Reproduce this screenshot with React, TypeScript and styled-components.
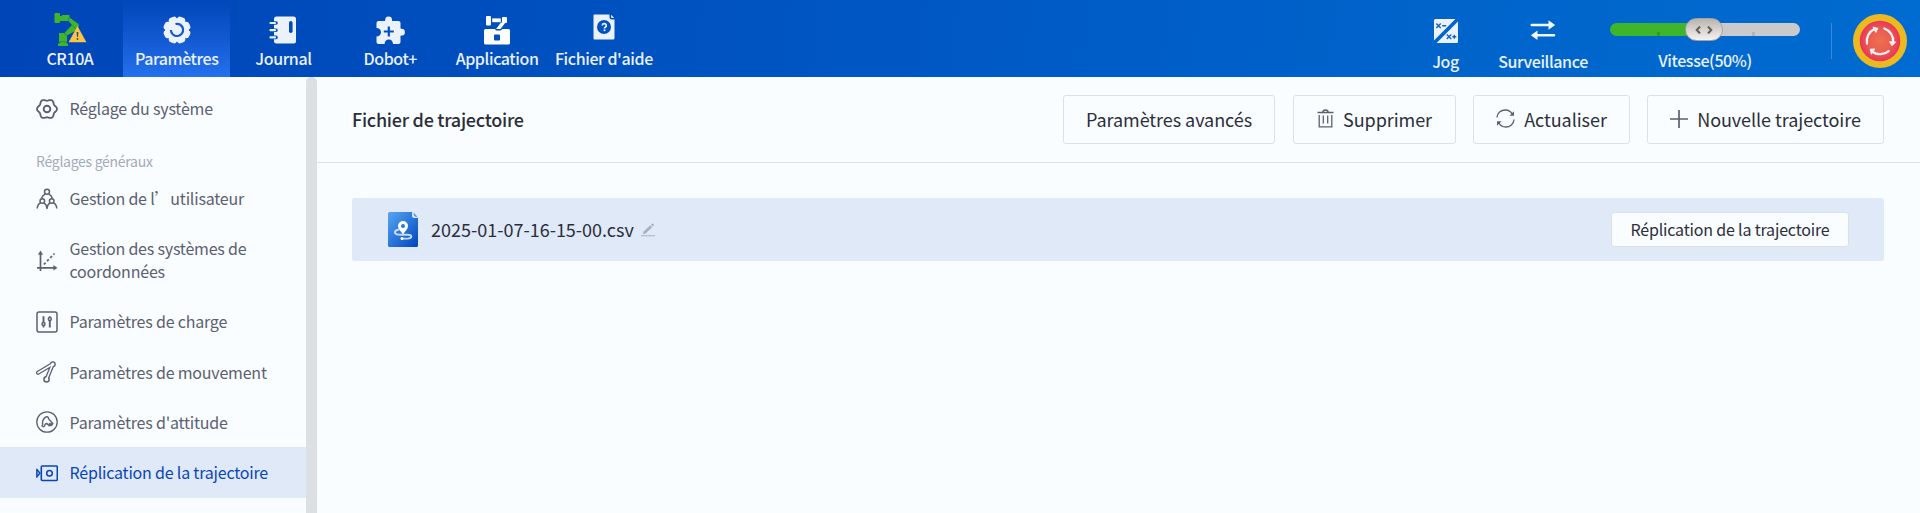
import React from "react";
import styled, { createGlobalStyle } from "styled-components";

const Global = createGlobalStyle`
  * { box-sizing: border-box; }
  body {
    margin: 0;
    background: #fafdff;
    font-family: "Noto Sans CJK SC", "Noto Sans", sans-serif;
    color: #2b2f3a;
    overflow: hidden;
  }
  svg { display: block; flex: none; }
`;

const Page = styled.div`
  display: flex;
  flex-direction: column;
  width: 1920px;
  height: 513px;
  overflow: hidden;
`;

const TopBar = styled.header`
  display: flex;
  flex: none;
  height: 77px;
  padding-left: 16px;
  background: linear-gradient(97deg, #0045b8 0%, #0054c2 40%, #0064cb 75%, #006bd0 100%);
  color: #eaf1fc;
`;

const NavItem = styled.div<{ $active?: boolean }>`
  display: flex;
  flex-direction: column;
  align-items: center;
  width: 106.8px;
  padding-left: 1px;
  background: ${(p) => (p.$active ? "linear-gradient(180deg, #0047b9 0%, #0f55cb 40%, #2470ee 100%)" : "none")};
`;

const NavIcon = styled.div<{ $h?: number }>`
  display: flex;
  align-items: center;
  justify-content: center;
  height: ${(p) => p.$h ?? 60}px;
  flex: none;
`;

const Label = styled.span<{ $mt?: number }>`
  font-size: 16px;
  font-weight: 500;
  line-height: 24px;
  letter-spacing: -0.4px;
  margin-top: ${(p) => p.$mt ?? -14}px;
  white-space: nowrap;
`;

const RightTools = styled.div`
  display: flex;
  margin-left: auto;
  padding-right: 13px;
`;

const Tool = styled.div<{ $w: number }>`
  display: flex;
  flex-direction: column;
  align-items: center;
  width: ${(p) => p.$w}px;
`;

const Speed = styled.div`
  display: flex;
  flex-direction: column;
  align-items: center;
  width: 190px;
  margin-left: 18px;
  padding-top: 23px;
`;

const Track = styled.div`
  position: relative;
  display: flex;
  width: 190px;
  height: 13px;
  border-radius: 7px;
  background: linear-gradient(90deg, #3fb52c 50%, #cacaca 50%);
`;

const Tick = styled.i<{ $color: string }>`
  width: 3px;
  height: 4px;
  margin-top: 9px;
  margin-left: 47px;
  margin-right: 45px;
  background: ${(p) => p.$color};
`;

const Thumb = styled.div`
  position: absolute;
  left: 75px;
  top: -5px;
  width: 38px;
  height: 23px;
  border-radius: 12px;
  border: 1px solid #a9a49f;
  background: linear-gradient(180deg, #b9b4ae 0%, #d4d0cc 45%, #f4f2f0 100%);
  display: flex;
  align-items: center;
  justify-content: center;
`;

const Divider = styled.div`
  width: 1px;
  height: 36px;
  margin: 23px 21px 0 31px;
  background: #3c86dc;
`;

const EStop = styled.div`
  padding-top: 14px;
`;

const Body = styled.div`
  display: flex;
  flex: 1;
  min-height: 0;
`;

const Sidebar = styled.nav`
  width: 306px;
  padding-top: 7px;
  overflow: hidden;
`;

const SideItem = styled.div<{ $active?: boolean; $h?: number }>`
  display: flex;
  align-items: center;
  height: ${(p) => p.$h ?? 50}px;
  padding-left: 36px;
  color: ${(p) => (p.$active ? "#0a45b8" : "#5a6070")};
  background: ${(p) => (p.$active ? "#e0e9f8" : "transparent")};
`;

const SideText = styled.span<{ $lift?: number }>`
  margin-left: 11.5px;
  padding-bottom: ${(p) => p.$lift ?? 0}px;
  font-size: 16px;
  line-height: 23px;
  letter-spacing: -0.2px;
  width: 210px;
`;

const SideGroup = styled.div`
  height: 40px;
  padding-left: 36px;
  font-size: 14px;
  line-height: 55px;
  letter-spacing: -0.28px;
  color: #a4abb8;
`;

const ScrollBar = styled.div`
  flex: none;
  width: 11px;
  border-radius: 5px 5px 0 0;
  background: #dde0e3;
`;

const Main = styled.main`
  flex: 1;
  min-width: 0;
`;

const Heading = styled.div`
  display: flex;
  align-items: center;
  height: 86px;
  padding: 0 36px 0 35px;
  border-bottom: 1px solid #dde2e8;
`;

const Title = styled.h1`
  margin: 0 auto 0 0;
  padding-bottom: 2px;
  font-size: 18px;
  font-weight: 500;
  line-height: 26px;
  letter-spacing: -0.26px;
`;

const Button = styled.button<{ $w: number; $after?: number }>`
  display: flex;
  align-items: center;
  justify-content: center;
  gap: 9px;
  width: ${(p) => p.$w}px;
  height: 49px;
  padding: 0 0 2px;
  margin-right: ${(p) => p.$after ?? 17}px;
  border: 1px solid #dce1e7;
  border-radius: 3px;
  background: #fafdff;
  color: #2b2f3a;
  font-family: inherit;
  font-size: 18px;
  letter-spacing: -0.06px;
  white-space: nowrap;
`;

const FileRow = styled.div`
  display: flex;
  align-items: center;
  height: 63px;
  margin: 35px 36px 0 35px;
  padding: 0 35px 0 36px;
  border-radius: 3px;
  background: #e0e9f8;
`;

const FileName = styled.span`
  margin: 0 7px 0 13px;
  padding-bottom: 2px;
  font-size: 18px;
  line-height: 26px;
`;

const RowButton = styled(Button)`
  height: 35px;
  margin-left: auto;
  padding-bottom: 1px;
  font-size: 16px;
  letter-spacing: -0.18px;
`;

const RobotIcon = () => (
  <svg width="34" height="34" viewBox="56 13 34 34">
    <g fill="#3fb52c">
      <rect x="57.5" y="13" width="5.5" height="10" rx="1" />
      <path d="M63 16h2v5h-2z" />
      <path d="M65 15h7.5v2.500L81.500 24l.5 2-4 5-8 4.500V42H62v-9h5.500l7.500-8-3.500-4H65z" />
      <path d="M62.500 42h7v1.500H71V46H61v-2.500h1.500z" />
    </g>
    <path d="M72.500 17 71 21M67 33l3 3M62.500 41.800h7M75 25l4 4" fill="none" stroke="#0a7a58" strokeWidth=".6" />
    <path d="M80.500 26.500 89 42H72z" fill="#ffc542" stroke="#ffc542" strokeWidth=".5" strokeLinejoin="round" />
    <path d="M79.600 32h1.800l-.4 5h-1z" fill="#1b4d9a" />
    <circle cx="80.500" cy="39" r=".9" fill="#1b4d9a" />
  </svg>
);

const GearIcon = () => (
  <svg width="28" height="28" viewBox="-14 -14 28 28">
    <g fill="#ecf2fc">
      <circle r="11.800" />
      {[0, 45, 90, 135, 180, 225, 270, 315].map((a) => (
        <rect key={a} x="-4.200" y="-13.700" width="8.400" height="6" rx="3" transform={`rotate(${a + 22.5})`} />
      ))}
    </g>
    <path d="M-1.500 -6A6.100 6.100 0 1 1 -6.100 0" fill="none" stroke="#1558cf" strokeWidth="2.200" />
  </svg>
);

const JournalIcon = () => (
  <svg width="28" height="28" viewBox="0 0 28 28">
    <rect x="5" y=".5" width="22" height="27" rx="2.500" fill="#ecf2fc" />
    <g stroke="#004bbc" strokeWidth="3.600" strokeLinecap="round">
      <path d="M3 7h4M3 14.200h4M3 21.400h4" />
    </g>
    <g stroke="#ecf2fc" strokeWidth="2.200" strokeLinecap="round">
      <path d="M1.500 7h4.500M1.500 14.200h4.500M1.500 21.400h4.500" />
    </g>
    <rect x="20" y="5" width="3.600" height="12" rx="1.800" fill="#004bbc" />
  </svg>
);

const PuzzleIcon = () => (
  <svg width="29" height="28" viewBox="0 0 29 28">
    <path
      fill="#ecf2fc"
      d="M2.500 5H8.600C9.200 5 9.200 4.500 9.200 4a3.400 3.400 0 0 1 6.800 0c0 .5 0 1 .6 1H22.500a2 2 0 0 1 2 2v5c0 .6.500.8 1 .8a3.400 3.400 0 0 1 0 6.800c-.5 0-1 .2-1 .8v5.600a2 2 0 0 1-2 2H17c0-2.600-1.600-4.500-4.200-4.500s-4.200 1.900-4.200 4.500H2.500a2 2 0 0 1-2-2V20.500c2.600 0 4.500-1.600 4.500-4.200S3.100 12 .5 12V7a2 2 0 0 1 2-2z"
    />
    <path d="M12.800 10.500v10M7.800 15.500h10" stroke="#004fbf" strokeWidth="2.200" />
  </svg>
);

const ApplicationIcon = () => (
  <svg width="28" height="30" viewBox="0 0 28 30">
    <g fill="#fff">
      <rect x="3" y="1" width="5" height="9.500" rx="1" />
      <rect x="9.200" y="3.400" width="8.600" height="3.800" />
      <rect x="19" y="2" width="5" height="6" rx="1" />
      <path d="M18 7.500h4.500L17.500 14H13z" />
      <path d="M2.500 14H12l1 1.500h4.500l2-1.500h6a1.500 1.500 0 0 1 1.500 1.500V28a1.500 1.500 0 0 1-1.500 1.500h-23A1.500 1.500 0 0 1 1 28V15.500A1.500 1.500 0 0 1 2.500 14z" />
    </g>
    <rect x="11" y="19.500" width="6" height="6" rx="1" fill="#0050c0" />
  </svg>
);

const HelpIcon = () => (
  <svg width="22" height="26" viewBox="0 0 22 26">
    <path d="M1.500.5h15v2.500a2.500 2.500 0 0 0 2.500 2.500h2.500V24a1.500 1.500 0 0 1-1.500 1.500H1.500A1 1 0 0 1 .5 24.500v-23a1 1 0 0 1 1-1z" fill="#ecf2fc" />
    <path d="M18 .8 21.200 4h-2a1.200 1.200 0 0 1-1.200-1.200z" fill="#ecf2fc" />
    <circle cx="11" cy="13" r="7" fill="#0052c1" />
    <path d="M9.300 11.500a2 1.900 0 1 1 2.900 1.700c-.6.300-.7.500-.7 1.200" fill="none" stroke="#ecf2fc" strokeWidth="1.700" />
    <circle cx="11.500" cy="16.300" r="1" fill="#ecf2fc" />
  </svg>
);

const JogIcon = () => (
  <svg width="24" height="24" viewBox="0 0 24 24">
    <path d="M1.500 0H21.400L0 21.400V1.500A1.500 1.500 0 0 1 1.500 0z" fill="#ecf2fc" />
    <path d="M24 2.600V22.500a1.500 1.500 0 0 1-1.500 1.500H2.600z" fill="#ecf2fc" />
    <g stroke="#1061c8" strokeWidth="1.400" fill="none">
      <path d="M2.300 4.500l4.400 4.400M6.700 4.500 2.300 8.900M8.200 6.800h4" />
      <path d="M12.800 15.500l4.400 4.400M17.200 15.500l-4.400 4.400M18.300 17.800h4M20.300 15.800v4" />
    </g>
  </svg>
);

const SwapIcon = () => (
  <svg width="26" height="22" viewBox="0 0 26 22">
    <g stroke="#f2f6fd" strokeWidth="2.600" strokeLinecap="round">
      <path d="M1.800 6h18M24 16.200H6" />
    </g>
    <path d="M18.500 1.200 25.200 6l-6.700 4.800zM7.500 11.400.8 16.200 7.500 21z" fill="#f2f6fd" />
  </svg>
);

const EStopIcon = () => (
  <svg width="54" height="54" viewBox="-27 -27 54 54">
    <defs>
      <radialGradient id="stop">
        <stop offset="0" stopColor="#ee7050" />
        <stop offset=".6" stopColor="#ea5c52" />
        <stop offset="1" stopColor="#ea3458" />
      </radialGradient>
    </defs>
    <circle r="27" fill="#ecb920" />
    <circle r="20.300" fill="url(#stop)" />
    {[0, 120, 240].map((a) => (
      <g key={a} transform={`rotate(${a})`}>
        <path d="M-13 2.500A13.200 13.200 0 0 1 -5.500 -12" fill="none" stroke="#fdeff0" strokeWidth="2.300" strokeLinecap="round" />
        <path d="M-7 -14-2.200 -12.600-4.200 -8.600z" fill="#fdeff0" stroke="#fdeff0" strokeLinejoin="round" />
      </g>
    ))}
  </svg>
);

const SideSvg = ({ children }: { children: React.ReactNode }) => (
  <svg width="22" height="22" viewBox="0 0 22 22" fill="none" stroke="currentColor" strokeWidth="1.500" strokeLinejoin="round">
    {children}
  </svg>
);

const cogOutline = Array.from({ length: 72 }, (_, i) => {
  const a = (i / 72) * Math.PI * 2;
  const r = 9.1 + 0.9 * Math.cos(6 * a);
  return `${(11 + r * Math.cos(a)).toFixed(2)},${(11 + r * Math.sin(a)).toFixed(2)}`;
}).join(" ");

const SettingsIcon = () => (
  <SideSvg>
    <polygon points={cogOutline} strokeWidth="1.800" />
    <circle cx="11" cy="11" r="3.300" strokeWidth="1.900" />
  </SideSvg>
);

const UsersIcon = () => (
  <SideSvg>
    <circle cx="11" cy="3.800" r="2.500" />
    <circle cx="6.300" cy="13" r="2.300" />
    <circle cx="15.700" cy="13" r="2.300" />
    <path d="M5.500 10.500C6.200 8.500 7.600 6.800 9 6.300M16.500 10.500c-.7-2-2.100-3.700-3.500-4.200M1.200 20.500c.3-3 1.800-5 3.500-5.700M7.900 14.900c1.700.9 2.900 2.700 3.100 5.600.2-2.900 1.400-4.700 3.100-5.600M20.800 20.500c-.3-3-1.800-5-3.500-5.700" />
  </SideSvg>
);

const AxesIcon = () => (
  <SideSvg>
    <path d="M4.500 3v18M1 17.800h19" strokeWidth="1.700" />
    <path d="M4.500.8 6.700 4.600H2.300zM21.200 17.800l-3.600 2.400v-4.800z" fill="currentColor" strokeWidth=".4" />
    <path d="M7.800 14.500 18.500 3.500" strokeDasharray="2.600 2" strokeWidth="1.700" />
  </SideSvg>
);

const LoadIcon = () => (
  <SideSvg>
    <rect x="1" y="1" width="20" height="20" rx="2" />
    <path d="M7.500 5.200v6.600M13.800 9v7.500" strokeWidth="1.900" />
    <circle cx="7.500" cy="13" r="1.500" />
    <circle cx="13.800" cy="8" r="1.500" />
    <path d="M7.500 14.500v2M13.800 5.200v1.500" strokeWidth="1.700" />
  </SideSvg>
);

const MotionIcon = () => (
  <SideSvg>
    <g strokeLinecap="round">
      <path d="M2 11.800 16.800 3 10.500 18.500" strokeWidth="4.200" />
      <path d="M16.800 3.200v.1" strokeWidth="6" />
      <path d="M10.500 18.400v.1" strokeWidth="6.600" />
      <g stroke="#fafdff">
        <path d="M2 11.800 16.800 3 10.500 18.500" strokeWidth="1.600" />
        <path d="M16.800 3.200v.1" strokeWidth="3.200" />
        <path d="M10.500 18.400v.1" strokeWidth="3.600" />
      </g>
    </g>
  </SideSvg>
);

const AttitudeIcon = () => (
  <SideSvg>
    <circle cx="11" cy="11" r="10.200" strokeWidth="1.300" />
    <path d="M6.400 15.600c-.5-.6-.4-1.400.2-1.900C6.200 10.500 7 8 9.200 6.400c1.300-1 2.600-.8 3.200.5.300 1.500 1 2.500 2.300 3.300l2.300 2.500M8.400 15.800c0-1.800.8-2.900 2.200-3.400l1.400 1.200 1.200 1.400" strokeWidth="1.400" />
    <path d="M13 12.300l4.300.4-1.800 2.300-2.600-.2z" fill="currentColor" strokeWidth=".6" />
    <path d="M6.400 15.600h2" strokeWidth="1.400" />
  </SideSvg>
);

const ReplayIcon = () => (
  <SideSvg>
    <rect x="5.300" y="4" width="16" height="14.500" rx="1" strokeWidth="1.600" />
    <circle cx="13.500" cy="11.200" r="2.800" strokeWidth="1.500" />
    <path d="M.8 7.200 4 11.200.8 15.200z" fill="#8fb0ea" strokeWidth="1.300" />
  </SideSvg>
);

const TrashIcon = () => (
  <svg width="17" height="19" viewBox="0 0 17 19" fill="none" stroke="#5a6070" strokeWidth="1.300">
    <path d="M.5 3.500h16M5.800 3.300c0-1.500.8-2.300 2.700-2.300s2.700.8 2.700 2.300M2.200 6v11.800h12.600V6M6.300 6.500v8M10.700 6.500v8" />
  </svg>
);

const RefreshIcon = () => (
  <svg width="19" height="19" viewBox="0 0 19 19" fill="none" stroke="#5a6070" strokeWidth="1.300">
    <path d="M1 8.500C1.300 4 4.800 1 9.300 1c3.200 0 5.700 1.600 7.200 4.500M18 10.500c-.3 4.500-3.800 7.500-8.300 7.500-3.200 0-5.700-1.600-7.200-4.500" />
    <path d="M18 2.300v4.500h-4.600zM1 16.700v-4.500h4.600z" fill="#5a6070" stroke="none" />
  </svg>
);

const PlusIcon = () => (
  <svg width="18" height="18" viewBox="0 0 18 18" stroke="#5a6070" strokeWidth="1.700">
    <path d="M9 0v18M0 9h18" />
  </svg>
);

const FileIcon = () => (
  <svg width="30" height="35" viewBox="0 0 30 35">
    <defs>
      <linearGradient id="file" x1="0" y1="0" x2="1" y2="1">
        <stop offset="0" stopColor="#58a6f2" />
        <stop offset=".5" stopColor="#2a76da" />
        <stop offset="1" stopColor="#0543ba" />
      </linearGradient>
    </defs>
    <path d="M1.500 0H24l6 6v27.500a1.500 1.500 0 0 1-1.500 1.500h-27A1.500 1.500 0 0 1 0 33.500v-32A1.500 1.500 0 0 1 1.500 0z" fill="url(#file)" />
    <path d="M24 0l6 6h-3.500A2.500 2.500 0 0 1 24 3.500z" fill="#e0e9f8" />
    <path d="M25.800.8 29.500 4.800h-2a1.700 1.700 0 0 1-1.700-1.700z" fill="#5a98e6" />
    <path d="M11 17.500C8.500 17.800 7 18.800 7 20.200c0 1.800 2.500 2.600 6 2.600h6.500c2.500 0 3.800.6 3.800 1.800s-1.500 2-4 2H14" fill="none" stroke="#c7dcf8" strokeWidth="1.900" />
    <path d="M15 9a5 5 0 0 1 5 5c0 3-3 5.500-5 8.500-2-3-5-5.500-5-8.500a5 5 0 0 1 5-5z" fill="#fff" />
    <circle cx="15" cy="14" r="2" fill="#2a76da" />
    <circle cx="14" cy="26.500" r="1.500" fill="#fff" />
  </svg>
);

const PencilIcon = () => (
  <svg width="14" height="14" viewBox="0 0 14 14" fill="#a9b1bf">
    <path d="M2 11.200 2.500 8.500 9.300 2.200l1.900 2L4.500 10.500zM10 1.600 11.700.2l1.500 1.700-1.400 1.500zM0 12.200h14v1H0z" />
  </svg>
);

export default function App() {
  return (
    <Page>
      <Global />
      <TopBar>
        <NavItem>
          <NavIcon><RobotIcon /></NavIcon>
          <Label>CR10A</Label>
        </NavItem>
        <NavItem $active>
          <NavIcon><GearIcon /></NavIcon>
          <Label>Paramètres</Label>
        </NavItem>
        <NavItem>
          <NavIcon><JournalIcon /></NavIcon>
          <Label>Journal</Label>
        </NavItem>
        <NavItem>
          <NavIcon><PuzzleIcon /></NavIcon>
          <Label>Dobot+</Label>
        </NavItem>
        <NavItem>
          <NavIcon><ApplicationIcon /></NavIcon>
          <Label>Application</Label>
        </NavItem>
        <NavItem>
          <NavIcon $h={54}><HelpIcon /></NavIcon>
          <Label $mt={-8}>Fichier d'aide</Label>
        </NavItem>
        <RightTools>
          <Tool $w={97}>
            <NavIcon $h={62}><JogIcon /></NavIcon>
            <Label $mt={-13}>Jog</Label>
          </Tool>
          <Tool $w={98}>
            <NavIcon $h={60}><SwapIcon /></NavIcon>
            <Label $mt={-11}>Surveillance</Label>
          </Tool>
          <Speed>
            <Track>
              <Tick $color="#37992c" />
              <Tick $color="#b4b4b4" />
              <Thumb>
                <svg width="18" height="8" viewBox="0 0 18 8" fill="none" stroke="#66615e" strokeWidth="2.200">
                  <path d="M5 .6 1.800 4 5 7.400M13 .6 16.200 4 13 7.400" />
                </svg>
              </Thumb>
            </Track>
            <Label $mt={12}>Vitesse(50%)</Label>
          </Speed>
          <Divider />
          <EStop><EStopIcon /></EStop>
        </RightTools>
      </TopBar>
      <Body>
        <Sidebar>
          <SideItem><SettingsIcon /><SideText $lift={2}>Réglage du système</SideText></SideItem>
          <SideGroup>Réglages généraux</SideGroup>
          <SideItem><UsersIcon /><SideText $lift={2}>Gestion de l’utilisateur</SideText></SideItem>
          <SideItem $h={73}><AxesIcon /><SideText $lift={2}>Gestion des systèmes de coordonnées</SideText></SideItem>
          <SideItem><LoadIcon /><SideText $lift={1}>Paramètres de charge</SideText></SideItem>
          <SideItem><MotionIcon /><SideText>Paramètres de mouvement</SideText></SideItem>
          <SideItem><AttitudeIcon /><SideText>Paramètres d'attitude</SideText></SideItem>
          <SideItem $active $h={51}><ReplayIcon /><SideText>Réplication de la trajectoire</SideText></SideItem>
        </Sidebar>
        <ScrollBar />
        <Main>
          <Heading>
            <Title>Fichier de trajectoire</Title>
            <Button $w={212} $after={18}>Paramètres avancés</Button>
            <Button $w={163}><TrashIcon />Supprimer</Button>
            <Button $w={157}><RefreshIcon />Actualiser</Button>
            <Button $w={237} $after={0}><PlusIcon />Nouvelle trajectoire</Button>
          </Heading>
          <FileRow>
            <FileIcon />
            <FileName>2025-01-07-16-15-00.csv</FileName>
            <PencilIcon />
            <RowButton $w={238} $after={0}>Réplication de la trajectoire</RowButton>
          </FileRow>
        </Main>
      </Body>
    </Page>
  );
}
